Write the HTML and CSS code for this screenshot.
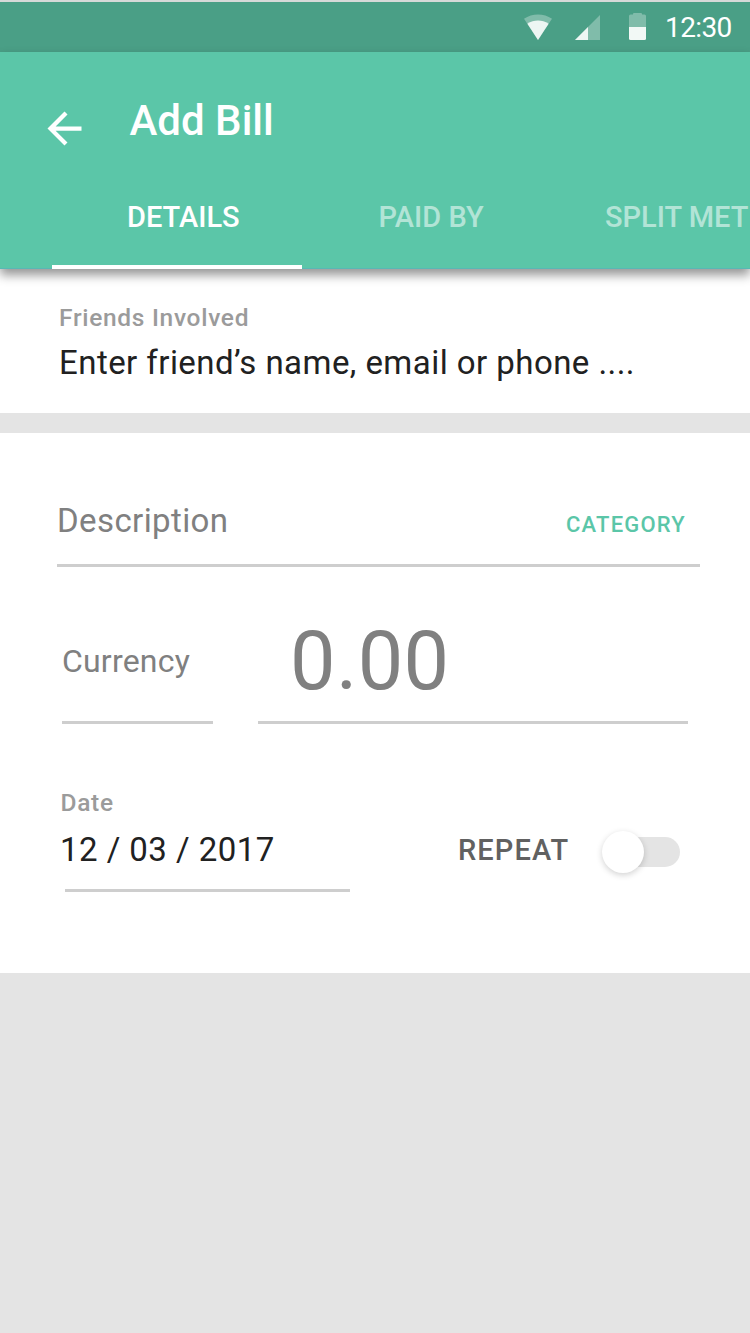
FILE: index.html
```html
<!DOCTYPE html>
<html lang="en">
<head>
    <meta charset="UTF-8">
    <meta name="viewport" content="width=device-width, initial-scale=1.0">
    <title>Add Bill</title>
    <link rel="stylesheet" href="styles.css">
</head>
<body>

    <div class="status-bar">
        <svg class="wifi" width="28" height="26" viewBox="0 0 28 26">
            <path d="M0 4.8C8-1 20-1 28 4.8L14 26z" fill="#fff" fill-opacity=".3"/>
            <path d="M3.400 9.800C10 5.500 18 5.500 24.600 9.800L14 26z" fill="#fff" fill-opacity=".86"/>
        </svg>
        <svg class="signal" width="25" height="25" viewBox="0 0 25 25">
            <path d="M25 0v25H0z" fill="#fff" fill-opacity=".3"/>
            <path d="M13 12v13H0z" fill="#fff" fill-opacity=".86"/>
        </svg>
        <svg class="battery" width="17" height="27" viewBox="0 0 17 27">
            <path d="M0 14V3q0-1.500 1.500-1.500H4V1q0-1 1-1h7q1 0 1 1v.5h2.500Q17 1.500 17 3v11z" fill="#fff" fill-opacity=".3"/>
            <path d="M0 14h17v11.500q0 1.500-1.500 1.500h-14Q0 27 0 25.500z" fill="#fff" fill-opacity=".93"/>
        </svg>
        <span class="clock">12:30</span>
    </div>

    <header class="app-bar">
        <div class="title-row">
            <svg class="back" width="51" height="51" viewBox="0 0 24 24">
                <path d="M20 11H7.830l5.590-5.590L12 4l-8 8 8 8 1.410-1.410L7.830 13H20v-2z" fill="#fff"/>
            </svg>
            <h1>Add Bill</h1>
        </div>
        <nav class="tabs">
            <a class="tab active">DETAILS</a>
            <a class="tab paid">PAID BY</a>
            <a class="tab split">SPLIT MET</a>
        </nav>
    </header>

    <section class="friends">
        <div class="label">Friends Involved</div>
        <div class="value friends-value">Enter friend’s name, email or phone ....</div>
    </section>

    <section class="bill">
        <div class="description-row">
            <span class="description">Description</span>
            <span class="category">CATEGORY</span>
        </div>

        <div class="amount-row">
            <div class="currency">Currency</div>
            <div class="amount">0.00</div>
        </div>

        <div class="date-row">
            <div class="date">
                <div class="label">Date</div>
                <div class="value date-value">12 / 03 / 2017</div>
            </div>
            <span class="repeat">REPEAT</span>
            <div class="switch"><div class="knob"></div></div>
        </div>
    </section>

</body>
</html>
```
FILE: styles.css
```css
* {
    box-sizing: border-box;
}

body {
    font-family: Roboto, "Liberation Sans", sans-serif;
    background-color: #e4e4e4;
    margin: 0;
    height: 1333px;
    overflow: hidden;
}

.status-bar {
    display: flex;
    align-items: flex-start;
    height: 52px;
    padding-left: 523.500px;
    border-top: 2px solid #d6d9d8;
    background-color: #4a9f86;
    color: #fff;
}

.wifi {
    margin: 12px 23.500px 0 0;
}

.signal {
    margin: 13px 29px 0 0;
}

.battery {
    margin: 11px 19px 0 0;
}

.clock {
    font-size: 28px;
    line-height: 32px;
    letter-spacing: -0.6px;
    margin-top: 10px;
}

.app-bar {
    position: relative;
    height: 217px;
    padding-top: 44px;
    background-color: #5bc6a8;
    border-bottom: 1px solid #58b8b5;
    box-shadow: 0 6px 10px rgba(0, 0, 0, 0.42);
    color: #fff;
}

.title-row {
    display: flex;
    height: 101px;
    padding-left: 39px;
}

.back {
    margin: 6.500px 39.500px 0 0;
}

h1 {
    margin: 0;
    font-size: 42px;
    line-height: 50px;
    font-weight: 500;
}

.tabs {
    display: flex;
    height: 72px;
    padding-left: 52px;
    font-size: 29px;
    line-height: 40px;
    font-weight: 500;
    white-space: nowrap;
}

.tab {
    flex: none;
    width: 250px;
    color: rgba(255, 255, 255, 0.54);
}

.active {
    padding-left: 75px;
    border-bottom: 4.500px solid #fff;
    color: #fff;
}

.paid {
    padding-left: 76.500px;
}

.split {
    width: 198px;
    padding-left: 53px;
}

.friends {
    height: 144px;
    padding: 33px 0 0 59px;
    background-color: #fff;
}

.label {
    font-size: 24.500px;
    line-height: 32px;
    font-weight: 500;
    letter-spacing: 0.7px;
    color: #9b9b9b;
}

.value {
    font-size: 33px;
    line-height: 40px;
    color: #212121;
    white-space: nowrap;
}

.friends-value {
    margin-top: 9px;
    letter-spacing: 0.450px;
}

.bill {
    height: 540px;
    margin-top: 20px;
    padding-top: 58px;
    background-color: #fff;
}

.description-row {
    display: flex;
    justify-content: space-between;
    height: 76px;
    margin: 0 50px 0 57px;
    padding-right: 14px;
    border-bottom: 3px solid #cecece;
}

.description {
    margin-top: 10px;
    font-size: 33px;
    line-height: 40px;
    letter-spacing: 0.400px;
    color: #808080;
}

.category {
    margin-top: 19px;
    font-size: 22px;
    line-height: 30px;
    font-weight: 500;
    letter-spacing: 1.200px;
    color: #5bc6a8;
}

.amount-row {
    display: flex;
    gap: 45px;
    height: 157px;
    padding-left: 62px;
    color: #808080;
}

.currency {
    width: 151px;
    padding-top: 74px;
    border-bottom: 3px solid #cecece;
    font-size: 32px;
    line-height: 40px;
    letter-spacing: 0.200px;
}

.amount {
    width: 430px;
    padding: 45px 0 0 32px;
    border-bottom: 3px solid #cecece;
    font-size: 81px;
    line-height: 100px;
    letter-spacing: 0.400px;
}

.date-row {
    display: flex;
    height: 168px;
    padding: 63px 0 0 60px;
}

.date {
    width: 290px;
}

.date .label {
    padding-left: 0.500px;
}

.date::after {
    content: '';
    display: block;
    height: 3px;
    margin: 19px 0 0 5px;
    background-color: #cecece;
}

.date-value {
    margin-top: 11px;
    letter-spacing: 0.450px;
}

.repeat {
    width: 146px;
    margin: 43px 0 0 108px;
    font-size: 29px;
    line-height: 40px;
    font-weight: 500;
    letter-spacing: 1.100px;
    color: #616161;
}

.switch {
    width: 75.500px;
    height: 30px;
    margin-top: 50px;
    border-radius: 15px;
    background-color: #e4e4e4;
}

.knob {
    width: 42px;
    height: 42px;
    margin: -6px 0 0 -2px;
    border-radius: 50%;
    background-color: #fff;
    box-shadow: 0 2px 6px rgba(0, 0, 0, 0.18);
}
```
